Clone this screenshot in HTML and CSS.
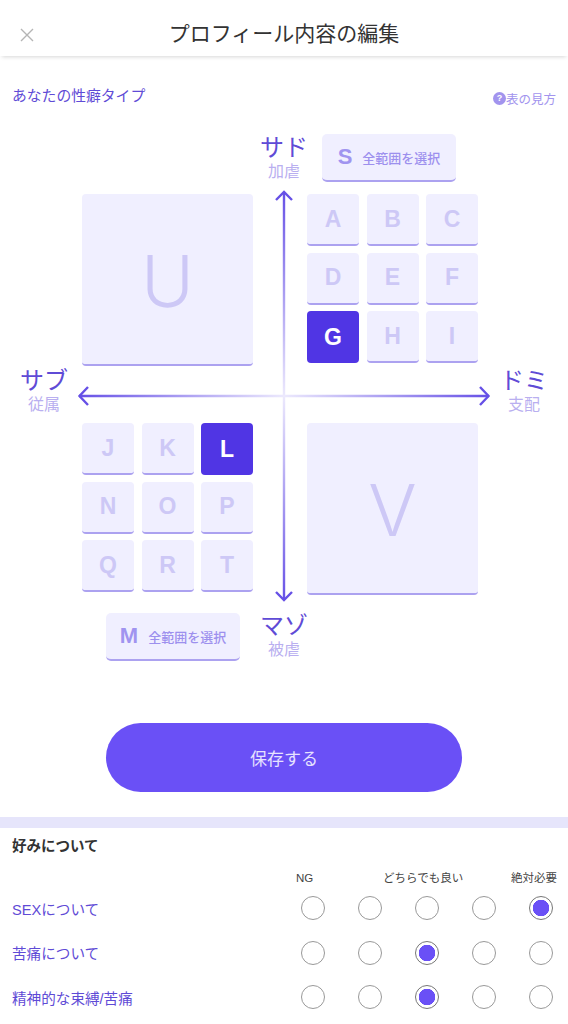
FILE: index.html
```html
<!DOCTYPE html>
<html lang="ja">
<head>
<meta charset="utf-8">
<title>プロフィール内容の編集</title>
<link rel="stylesheet" href="styles.css">
</head>
<body>
<header class="topbar">
  <svg class="close" viewBox="0 0 14 14" width="14" height="14"><path d="M1 1L13 13M13 1L1 13" fill="none" stroke="#b5b5b5" stroke-width="1.4"/></svg>
  <h1 class="title">プロフィール内容の編集</h1>
</header>
<section class="type-head">
  <h2 class="type-title">あなたの性癖タイプ</h2>
  <a class="help"><span class="help-icon">?</span>表の見方</a>
</section>
<section class="chart">
  <svg class="axes" viewBox="0 134 568 540" width="568" height="540">
    <defs>
      <linearGradient id="gv" gradientUnits="userSpaceOnUse" x1="0" y1="190" x2="0" y2="602">
        <stop offset="0" stop-color="#6650e6"/><stop offset="0.5" stop-color="#ece9fd"/><stop offset="1" stop-color="#6650e6"/>
      </linearGradient>
      <linearGradient id="gh" gradientUnits="userSpaceOnUse" x1="78" y1="0" x2="490" y2="0">
        <stop offset="0" stop-color="#6650e6"/><stop offset="0.5" stop-color="#ece9fd"/><stop offset="1" stop-color="#6650e6"/>
      </linearGradient>
    </defs>
    <path d="M284 192V600" fill="none" stroke="url(#gv)" stroke-width="2.4"/>
    <path d="M79 396H489" fill="none" stroke="url(#gh)" stroke-width="2.4"/>
    <path d="M276 200L284 192L292 200M276 592L284 600L292 592" fill="none" stroke="#6650e6" stroke-width="2.4"/>
    <path d="M88 387L79.500 396L88 405M480 387L488.500 396L480 405" fill="none" stroke="#6650e6" stroke-width="2.4"/>
  </svg>
  <div class="axis-label label-top"><div class="axis-main">サド</div><div class="axis-sub">加虐</div></div>
  <div class="axis-label label-left"><div class="axis-main">サブ</div><div class="axis-sub">従属</div></div>
  <div class="axis-label label-right"><div class="axis-main">ドミ</div><div class="axis-sub">支配</div></div>
  <div class="axis-label label-bottom"><div class="axis-main">マゾ</div><div class="axis-sub">被虐</div></div>

  <button class="range range-s"><span class="range-letter">S</span>全範囲を選択</button>
  <div class="quads">
    <div class="key big">U</div>
    <div class="keys">
      <div class="key">A</div><div class="key">B</div><div class="key">C</div>
      <div class="key">D</div><div class="key">E</div><div class="key">F</div>
      <div class="key on">G</div><div class="key">H</div><div class="key">I</div>
    </div>
    <div class="keys">
      <div class="key">J</div><div class="key">K</div><div class="key on">L</div>
      <div class="key">N</div><div class="key">O</div><div class="key">P</div>
      <div class="key">Q</div><div class="key">R</div><div class="key">T</div>
    </div>
    <div class="key big">V</div>
  </div>
  <button class="range range-m"><span class="range-letter">M</span>全範囲を選択</button>
</section>
<div class="save-wrap"><button class="save">保存する</button></div>
<div class="band"></div>
<section class="prefs">
  <h2 class="prefs-title">好みについて</h2>
  <div class="scale"><span>NG</span><span>どちらでも良い</span><span>絶対必要</span></div>
  <div class="pref-row">
    <span class="pref-name">SEXについて</span>
    <div class="radios"><i class="radio"></i><i class="radio"></i><i class="radio"></i><i class="radio"></i><i class="radio on"></i></div>
  </div>
  <div class="pref-row">
    <span class="pref-name">苦痛について</span>
    <div class="radios"><i class="radio"></i><i class="radio"></i><i class="radio on"></i><i class="radio"></i><i class="radio"></i></div>
  </div>
  <div class="pref-row">
    <span class="pref-name">精神的な束縛/苦痛</span>
    <div class="radios"><i class="radio"></i><i class="radio"></i><i class="radio on"></i><i class="radio"></i><i class="radio"></i></div>
  </div>
</section>
</body>
</html>
```
FILE: styles.css
```css
* { box-sizing: border-box; }
html, body { margin: 0; padding: 0; background: #fff; }
body {
  width: 568px;
  height: 1024px;
  overflow: hidden;
  font-family: "Liberation Sans", "Noto Sans CJK JP", sans-serif;
  color: #333;
}
.topbar {
  height: 56px;
  position: relative;
  display: flex;
  align-items: center;
  justify-content: center;
  padding-top: 11px;
  box-shadow: 0 3px 4px -2px rgba(0,0,0,.16);
  background: #fff;
}
.close { position: absolute; left: 20px; top: 28px; }
.title { margin: 0; font-size: 21px; font-weight: 400; line-height: 26px; color: #333; }
.type-head {
  display: flex;
  justify-content: space-between;
  align-items: flex-start;
  padding: 30px 12px 0;
  height: 78px;
}
.type-title { margin: 0; font-size: 14.800px; font-weight: 400; line-height: 20px; color: #5f4bd6; }
.help { display: flex; align-items: center; height: 24px; font-size: 12.500px; color: #a294ee; }
.help-icon {
  width: 13px; height: 13px; border-radius: 50%;
  background: #a294ee; color: #fff;
  font-size: 9px; font-weight: 700; line-height: 13px; text-align: center;
}
.chart { position: relative; height: 589px; padding-left: 82px; }
.axes { position: absolute; left: 0; top: 0; }
.axis-label { position: absolute; width: 60px; text-align: center; }
.axis-main { font-size: 24px; line-height: 28px; color: #5f4bd6; }
.axis-sub { font-size: 16px; line-height: 20px; color: #b9aff0; }
.label-top { left: 254px; top: 0; }
.label-left { left: 14px; top: 233px; }
.label-right { left: 494px; top: 233px; }
.label-bottom { left: 254px; top: 478px; }
.range {
  display: flex;
  align-items: center;
  justify-content: center;
  width: 134px;
  height: 48px;
  padding: 0;
  border: 0;
  border-bottom: 2px solid #aca2f0;
  border-radius: 5px;
  background: #f0efff;
  font-family: inherit;
  font-size: 13px;
  font-weight: 500;
  color: #9d90ee;
  position: relative;
}
.range-letter { font-size: 22px; font-weight: 700; margin-right: 10px; color: #a094f0; }
.range-s { margin-left: 240px; }
.range-m { margin-left: 24px; margin-top: 18px; }
.quads {
  display: grid;
  grid-template-columns: 171px 171px;
  column-gap: 54px;
  row-gap: 57px;
  margin-top: 12px;
  position: relative;
}
.keys {
  display: grid;
  grid-template-columns: repeat(3, 52px);
  grid-auto-rows: 52px;
  gap: 6.500px 7.500px;
}
.key {
  display: flex;
  align-items: center;
  justify-content: center;
  background: #f0efff;
  border-bottom: 2px solid #aca2f0;
  border-radius: 4px;
  font-size: 23px;
  font-weight: 700;
  color: #cdc8f6;
}
.key.on { background: #5035e4; border-bottom: 0; color: #fff; }
.key.big {
  height: 172px;
  padding-top: 3px;
  font-family: Inter, "Liberation Sans", sans-serif;
  font-size: 72px;
  font-weight: 300;
}
.save-wrap { display: flex; justify-content: center; }
.save {
  width: 356px;
  height: 69px;
  border: 0;
  border-radius: 35px;
  background: #6a50f6;
  color: #e6e2ff;
  font-family: inherit;
  font-size: 17px;
}
.band { height: 11px; margin-top: 25px; background: #e6e5fb; }
.prefs { padding: 8px 11px 0 12px; }
.prefs-title { margin: 0; font-size: 14.500px; font-weight: 700; line-height: 20px; color: #333; }
.scale {
  display: grid;
  grid-template-columns: 87px 128px 46px;
  justify-content: end;
  font-size: 11.500px;
  line-height: 16px;
  margin-top: 14px;
  color: #444;
}
.pref-row { display: flex; align-items: center; justify-content: space-between; height: 44.500px; padding-right: 4px; }
.pref-name { font-size: 14.600px; color: #5f4bd6; }
.radios { display: flex; gap: 33px; }
.radio {
  display: block;
  width: 24px;
  height: 24px;
  border: 1px solid #999;
  border-radius: 50%;
  background: #fff;
}
.radio.on { background: radial-gradient(circle, #6a50f6 8px, #fff 8.500px); border-color: #777; }
```
